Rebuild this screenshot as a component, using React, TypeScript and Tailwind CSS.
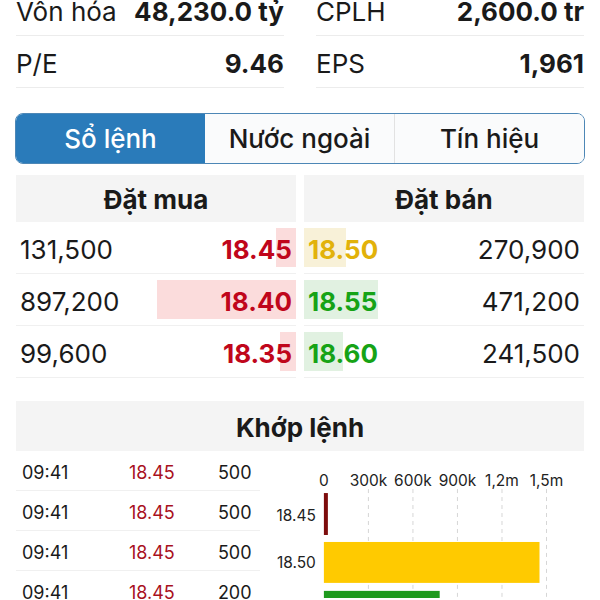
import React from "react";

type Stat = { label: string; value: string };

const stats: Stat[] = [
  { label: "Vốn hóa", value: "48,230.0 tỷ" },
  { label: "CPLH", value: "2,600.0 tr" },
  { label: "P/E", value: "9.46" },
  { label: "EPS", value: "1,961" },
];

const bids = [
  { qty: "131,500", price: "18.45", bar: 20 },
  { qty: "897,200", price: "18.40", bar: 139 },
  { qty: "99,600", price: "18.35", bar: 16 },
];

const asks = [
  { qty: "270,900", price: "18.50", bar: 42, color: "text-[#e2b20a]", bg: "bg-[#f8f1d8]" },
  { qty: "471,200", price: "18.55", bar: 74, color: "text-[#16a316]", bg: "bg-[#e1f1e1]" },
  { qty: "241,500", price: "18.60", bar: 39, color: "text-[#16a316]", bg: "bg-[#e1f1e1]" },
];

const trades = [
  { time: "09:41", price: "18.45", vol: "500" },
  { time: "09:41", price: "18.45", vol: "500" },
  { time: "09:41", price: "18.45", vol: "500" },
  { time: "09:41", price: "18.45", vol: "200" },
];

const ticks = ["0", "300k", "600k", "900k", "1,2m", "1,5m"];

const VolumeChart = () => {
  const x0 = 64;
  const step = 44.6;
  return (
    <svg width="325" height="147" viewBox="0 0 325 147" className="block">
      {ticks.map((t, i) => (
        <g key={t}>
          {i > 0 && (
            <line
              x1={x0 + i * step}
              x2={x0 + i * step}
              y1={38}
              y2={147}
              stroke="#d6d6d6"
              strokeWidth="1"
              strokeDasharray="4 4"
            />
          )}
          <text
            x={x0 + i * step}
            y={35}
            textAnchor="middle"
            fontSize="15.5"
            fill="#222"
            fontFamily="Inter, sans-serif"
          >
            {t}
          </text>
        </g>
      ))}
      <rect x={x0} y={42} width={4} height={42} fill="#7d0d0d" />
      <rect x={x0} y={91} width={216} height={41} fill="#ffca00" />
      <rect x={x0} y={140} width={116} height={41} fill="#1e9a1e" />
      <text x={56} y={70} textAnchor="end" fontSize="15.5" fill="#222" fontFamily="Inter, sans-serif">
        18.45
      </text>
      <text x={56} y={117} textAnchor="end" fontSize="15.5" fill="#222" fontFamily="Inter, sans-serif">
        18.50
      </text>
    </svg>
  );
};

const App = () => {
  return (
    <div className="h-[600px] w-[600px] overflow-hidden bg-white text-[#1a1a1a] font-['Inter','Noto_Sans',sans-serif]">
      {/* stats */}
      <div className="-mt-4 grid grid-cols-2 gap-x-8 px-4">
        {stats.map((s) => (
          <div
            key={s.label}
            className="flex h-[52px] items-center justify-between border-b border-[#ececec] pt-1 text-[26px]"
          >
            <span>{s.label}</span>
            <span className="font-bold">{s.value}</span>
          </div>
        ))}
      </div>

      {/* tabs */}
      <div className="mx-[15px] mt-[25px] flex h-[51px] overflow-hidden rounded-lg border border-[#4d87b6] text-[26px] font-medium">
        <div className="flex flex-1 items-center justify-center bg-[#2a7bba] text-white">Sổ lệnh</div>
        <div className="flex flex-1 items-center justify-center bg-[#fafbfc]">Nước ngoài</div>
        <div className="flex flex-1 items-center justify-center border-l border-[#e2e2e2] bg-[#fafbfc]">
          Tín hiệu
        </div>
      </div>

      {/* order book */}
      <div className="mt-[11px] grid grid-cols-2 gap-2 px-4 text-[26px]">
        <div>
          <div className="flex h-[47px] items-center justify-center bg-[#f4f4f4] pt-0.5 font-bold">Đặt mua</div>
          {bids.map((b) => (
            <div key={b.price} className="relative flex h-[52px] items-center justify-between border-b border-[#f0f0f0] px-1">
              <div className="absolute top-[6px] bottom-[6px] right-0 bg-[#fbdcdc]" style={{ width: b.bar }} />
              <span className="relative pt-1">{b.qty}</span>
              <span className="relative pt-1 font-bold text-[#c0061b]">{b.price}</span>
            </div>
          ))}
        </div>
        <div>
          <div className="flex h-[47px] items-center justify-center bg-[#f4f4f4] pt-0.5 font-bold">Đặt bán</div>
          {asks.map((a) => (
            <div key={a.price} className="relative flex h-[52px] items-center justify-between border-b border-[#f0f0f0] px-1">
              <div className={`absolute top-[6px] bottom-[6px] left-0 ${a.bg}`} style={{ width: a.bar }} />
              <span className={`relative pt-1 font-bold ${a.color}`}>{a.price}</span>
              <span className="relative pt-1">{a.qty}</span>
            </div>
          ))}
        </div>
      </div>

      {/* matched orders */}
      <div className="mt-[23px] px-4">
        <div className="flex h-[50px] items-center justify-center bg-[#f4f4f4] pt-0.5 text-[26px] font-bold">Khớp lệnh</div>
        <div className="flex">
          <div className="w-[244px] text-[18px]">
            {trades.map((t, i) => (
              <div key={i} className="flex h-[40px] items-center border-b border-[#f0f0f0] pt-1 pl-[6px] pr-2">
                <span className="w-[107px]">{t.time}</span>
                <span className="flex-1 text-[#a8101e]">{t.price}</span>
                <span>{t.vol}</span>
              </div>
            ))}
          </div>
          <VolumeChart />
        </div>
      </div>
    </div>
  );
};

export default App;
